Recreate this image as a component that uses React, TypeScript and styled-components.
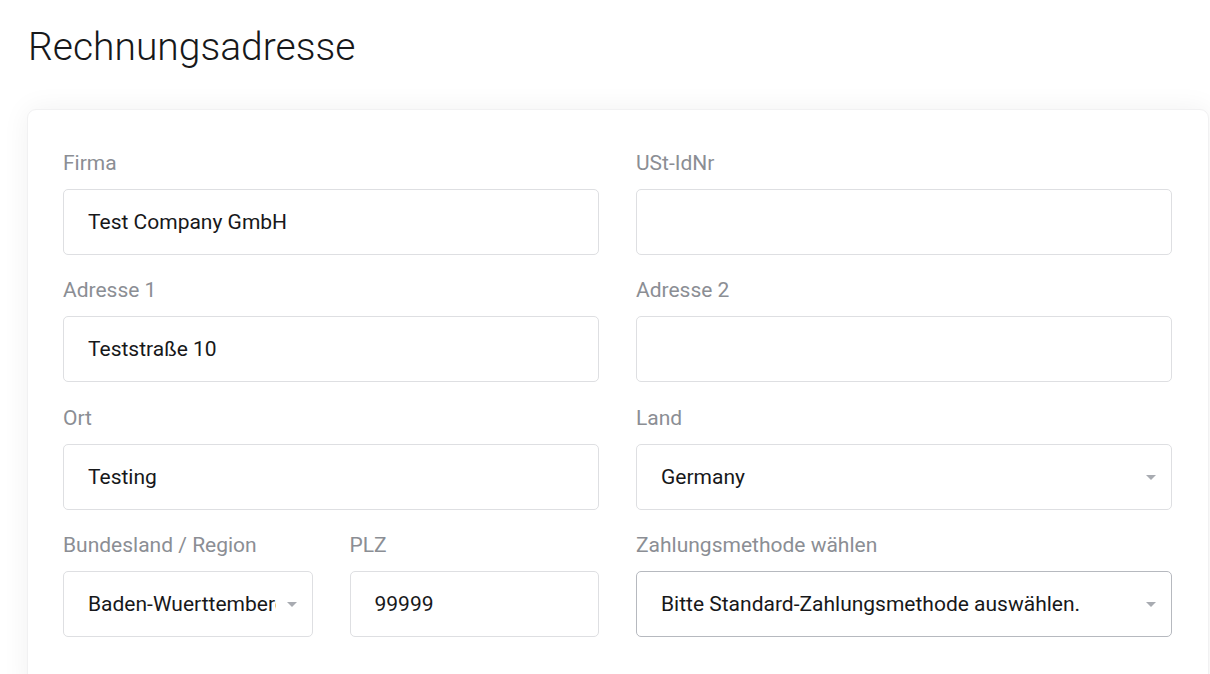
import styled, { createGlobalStyle } from "styled-components";

const GlobalStyle = createGlobalStyle`
  body {
    margin: 0;
    background: #ffffff;
    font-family: Roboto, "Noto Sans", sans-serif;
    color: #17181a;
  }
  * { box-sizing: border-box; }
`;

const Page = styled.div`
  padding: 22px 1px 0 27px;
  height: 674px;
  overflow: hidden;
`;

const Title = styled.h1`
  margin: 0 0 0 1px;
  font-size: 39px;
  font-weight: 300;
  line-height: 50px;
  color: #17181a;
`;

const Card = styled.section`
  margin-top: 37px;
  background: #fff;
  border: 1px solid #f1f1f2;
  border-radius: 9px;
  box-shadow: 0 0 28px rgba(0, 0, 0, 0.06);
  padding: 40px 36px 60px 35px;
`;

const Grid = styled.div`
  display: grid;
  grid-template-columns: 1fr 1fr;
  column-gap: 37px;
  row-gap: 22.33px;
`;

const SubGrid = styled.div`
  display: grid;
  grid-template-columns: 1fr 1fr;
  column-gap: 37px;
`;

const Field = styled.label`
  display: flex;
  flex-direction: column;
`;

const Label = styled.span`
  font-size: 21px;
  line-height: 26px;
  color: #8b8e94;
  margin-bottom: 13px;
  white-space: nowrap;
`;

const Input = styled.input`
  height: 66px;
  width: 100%;
  border: 1px solid #dedfe2;
  border-radius: 5px;
  padding: 0 24px;
  font-family: inherit;
  font-size: 21px;
  color: #17181a;
  background: #fff;
  outline: none;
`;

const SelectWrap = styled.div`
  position: relative;
`;

const Select = styled.select<{ $active?: boolean }>`
  appearance: none;
  height: 66px;
  width: 100%;
  border: 1px solid ${(p) => (p.$active ? "#b6b9bf" : "#dedfe2")};
  border-radius: 5px;
  padding: 0 36px 0 24px;
  font-family: inherit;
  font-size: 21px;
  color: #17181a;
  background: #fff;
  outline: none;
`;

const Caret = styled.span`
  position: absolute;
  right: 16px;
  top: 50%;
  margin-top: -2px;
  width: 0;
  height: 0;
  border-left: 5px solid transparent;
  border-right: 5px solid transparent;
  border-top: 5px solid #a8abb1;
  pointer-events: none;
`;

const TextField = ({ label, value }: { label: string; value: string }) => (
  <Field>
    <Label>{label}</Label>
    <Input readOnly value={value} />
  </Field>
);

const SelectField = ({ label, value, active }: { label: string; value: string; active?: boolean }) => (
  <Field>
    <Label>{label}</Label>
    <SelectWrap>
      <Select $active={active} value={value} onChange={() => {}}>
        <option value={value}>{value}</option>
      </Select>
      <Caret />
    </SelectWrap>
  </Field>
);

export default function App() {
  return (
    <>
      <GlobalStyle />
      <Page>
        <Title>Rechnungsadresse</Title>
        <Card>
          <Grid>
            <TextField label="Firma" value="Test Company GmbH" />
            <TextField label="USt-IdNr" value="" />
            <TextField label="Adresse 1" value="Teststraße 10" />
            <TextField label="Adresse 2" value="" />
            <TextField label="Ort" value="Testing" />
            <SelectField label="Land" value="Germany" />
            <SubGrid>
              <SelectField label="Bundesland / Region" value="Baden-Wuerttemberg" />
              <TextField label="PLZ" value="99999" />
            </SubGrid>
            <SelectField label="Zahlungsmethode wählen" value="Bitte Standard-Zahlungsmethode auswählen." active />
          </Grid>
        </Card>
      </Page>
    </>
  );
}
